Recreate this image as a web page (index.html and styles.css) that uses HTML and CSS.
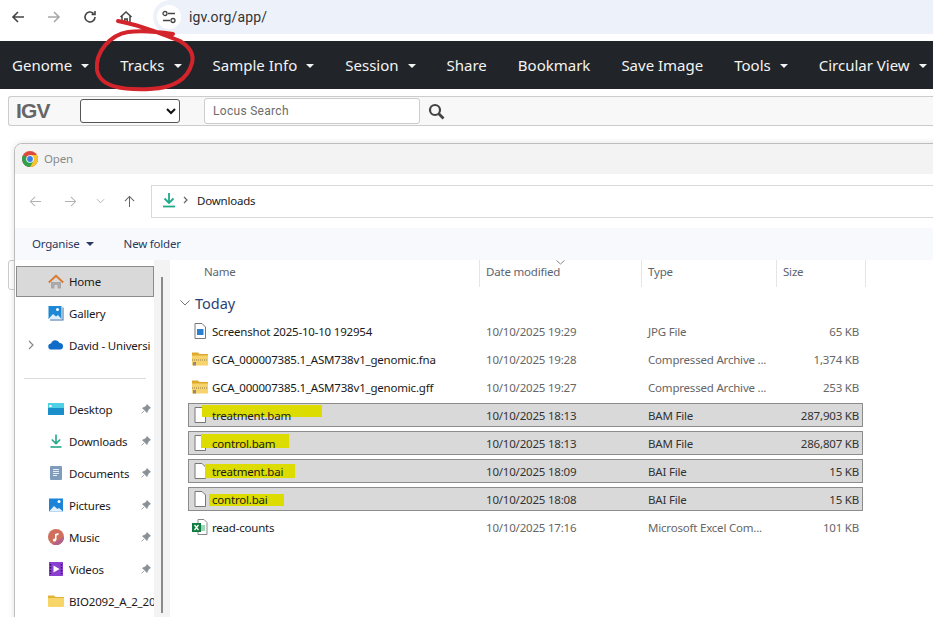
FILE: index.html
```html
<!DOCTYPE html>
<html lang="en">
<head>
    <meta charset="UTF-8">
    <title>IGV - Open dialog</title>
    <link rel="stylesheet" href="styles.css">
</head>
<body>

<!-- browser toolbar -->
<div class="browser-bar">
    <div class="browser-btns">
        <svg class="bicon" viewBox="0 0 14 14"><path d="M13 7H2M7 2L2 7l5 5" fill="none" stroke="#444" stroke-width="1.6"/></svg>
        <svg class="bicon" viewBox="0 0 14 14"><path d="M1 7h11M7 2l5 5-5 5" fill="none" stroke="#a8a8a8" stroke-width="1.6"/></svg>
        <svg class="bicon" viewBox="0 0 14 14"><path d="M12 7a5 5 0 1 1-1.6-3.7M12 1v3.4H8.6" fill="none" stroke="#444" stroke-width="1.6"/></svg>
        <svg class="bicon" viewBox="0 0 14 14"><path d="M1.5 7L7 2l5.500 5M3 6v6.500h8V6M5.800 12.500V9h2.400v3.500" fill="none" stroke="#444" stroke-width="1.500"/></svg>
    </div>
    <div class="url-pill">
        <span class="tune">
            <svg width="14" height="14" viewBox="0 0 14 14"><path d="M6 3.500h7M1 10.500h7" stroke="#444" stroke-width="1.500"/><circle cx="3" cy="3.500" r="2" fill="none" stroke="#444" stroke-width="1.300"/><circle cx="11" cy="10.500" r="2" fill="none" stroke="#444" stroke-width="1.300"/></svg>
        </span>
        <span class="url-text">igv.org/app/</span>
    </div>
</div>

<!-- igv navbar -->
<nav class="navbar">
    <span class="nav-item caret">Genome</span>
    <span class="nav-item caret">Tracks</span>
    <span class="nav-item caret">Sample Info</span>
    <span class="nav-item caret">Session</span>
    <span class="nav-item">Share</span>
    <span class="nav-item">Bookmark</span>
    <span class="nav-item">Save Image</span>
    <span class="nav-item caret">Tools</span>
    <span class="nav-item caret">Circular View</span>
</nav>

<div class="igv-bar">
    <span class="igv-logo">IGV</span>
    <div class="genome-select">
        <svg width="10" height="7" viewBox="0 0 10 7"><path d="M1 1l4 4 4-4" fill="none" stroke="#111" stroke-width="2"/></svg>
    </div>
    <div class="locus-input">Locus Search</div>
    <svg class="search-icon" width="17" height="17" viewBox="0 0 17 17"><circle cx="7" cy="7" r="5" fill="none" stroke="#444" stroke-width="2.200"/><path d="M10.800 10.800L15.500 15.500" stroke="#444" stroke-width="2.800"/></svg>
</div>
<div class="track-panel"></div>

<!-- file dialog -->
<div class="dialog">
    <div class="dialog-title">
        <svg width="16" height="16" viewBox="0 0 16 16">
            <circle cx="8" cy="8" r="8" fill="#dd4b3e"/>
            <path d="M8 8L1.100 4A8 8 0 0 0 8 16l3.500-4z" fill="#2fa04e"/>
            <path d="M8 4h6.900A8 8 0 0 1 8 16l3.500-6z" fill="#f6c42c"/>
            <circle cx="8" cy="8" r="3.800" fill="#fff"/>
            <circle cx="8" cy="8" r="2.900" fill="#3b7de8"/>
        </svg>
        <span>Open</span>
    </div>

    <div class="dialog-toolbar">
        <svg class="tool-icon" viewBox="0 0 14 14"><path d="M13 7H1.500M6.500 2l-5 5 5 5" fill="none" stroke="#b3b3b3" stroke-width="1.100"/></svg>
        <svg class="tool-icon tool-fwd" viewBox="0 0 14 14"><path d="M1 7h11.500M7.500 2l5 5-5 5" fill="none" stroke="#b3b3b3" stroke-width="1.100"/></svg>
        <svg class="tool-chev" viewBox="0 0 10 6"><path d="M1 1l4 4 4-4" fill="none" stroke="#b3b3b3" stroke-width="1.100"/></svg>
        <svg class="tool-icon" viewBox="0 0 14 14"><path d="M7 13V1.500M2 6.500l5-5 5 5" fill="none" stroke="#666" stroke-width="1.100"/></svg>
        <div class="address-box">
            <svg width="14" height="16" viewBox="0 0 14 16"><path d="M7 1v9.500M2.500 6.500L7 11l4.500-4.500" fill="none" stroke="#23a889" stroke-width="1.800"/><path d="M1 14.500h12" stroke="#23a889" stroke-width="1.800"/></svg>
            <svg class="crumb" width="5" height="8" viewBox="0 0 5 8"><path d="M1 1l3 3-3 3" fill="none" stroke="#666" stroke-width="1.200"/></svg>
            <span>Downloads</span>
        </div>
    </div>

    <div class="dialog-commands">
        <span class="cmd cmd-caret">Organise</span>
        <span class="cmd">New folder</span>
    </div>

    <div class="dialog-body">
        <aside class="sidebar">
            <div class="side-item selected">
                <svg class="side-icon" viewBox="0 0 16 16"><path d="M3 8h10v6.500H9.500V11h-3v3.500H3z" fill="#a9a9a9"/><path d="M.8 8.500L8 1.800l7.200 6.700" fill="none" stroke="#d9782f" stroke-width="1.800"/></svg>
                <span>Home</span>
            </div>
            <div class="side-item">
                <svg class="side-icon" viewBox="0 0 16 16"><rect x="0.500" y="1" width="13" height="13" fill="#1e88d6"/><path d="M.5 14l4.500-5 3 2.500L10 10l3.500 4z" fill="#dceefb"/><circle cx="9.500" cy="4.500" r="1.500" fill="#fff"/><path d="M14.500 2.500h1v13H2v-1h12.500z" fill="#3a6fa5"/></svg>
                <span>Gallery</span>
            </div>
            <div class="side-item">
                <svg class="side-chev" width="6" height="10" viewBox="0 0 6 10"><path d="M1 1l4 4-4 4" fill="none" stroke="#888" stroke-width="1.200"/></svg>
                <svg class="side-icon" viewBox="0 0 16 16"><path d="M3.500 12.500a3 3 0 0 1-.4-6A4.500 4.500 0 0 1 11.500 6a3.300 3.300 0 0 1 1 6.500z" fill="#0f6cc8"/></svg>
                <span>David - Universi</span>
            </div>
            <div class="side-sep"></div>
            <div class="side-item">
                <svg class="side-icon" viewBox="0 0 16 16"><rect y="2" width="16" height="12" fill="#1b8fc9"/><rect y="2" width="16" height="5" fill="#4fd0e6"/><rect x="1.500" y="4" width="2" height="2" fill="#fff"/></svg>
                <span>Desktop</span>
                <svg class="pin" viewBox="0 0 10 10"><path d="M6 .5L9.500 4 8 4.500 6.500 7 6 8.500 1.500 4 3 3.500 5.500 2zM3 7L.5 9.500" fill="#8a8f94" stroke="#8a8f94" stroke-width=".8"/></svg>
            </div>
            <div class="side-item">
                <svg class="side-icon" viewBox="0 0 16 16"><path d="M8 1.500v9M3.800 6.500L8 10.700l4.200-4.200" fill="none" stroke="#23a889" stroke-width="1.600"/><path d="M2.500 14h11" stroke="#23a889" stroke-width="1.600"/></svg>
                <span>Downloads</span>
                <svg class="pin" viewBox="0 0 10 10"><path d="M6 .5L9.500 4 8 4.500 6.500 7 6 8.500 1.500 4 3 3.500 5.500 2zM3 7L.5 9.500" fill="#8a8f94" stroke="#8a8f94" stroke-width=".8"/></svg>
            </div>
            <div class="side-item">
                <svg class="side-icon" viewBox="0 0 16 16"><rect x="2" y="1" width="12" height="14" rx="1" fill="#7f9cbd"/><path d="M5 4.500h6M5 6.500h6M5 8.500h6M5 10.500h4" stroke="#e8eef5" stroke-width="1"/></svg>
                <span>Documents</span>
                <svg class="pin" viewBox="0 0 10 10"><path d="M6 .5L9.500 4 8 4.500 6.500 7 6 8.500 1.500 4 3 3.500 5.500 2zM3 7L.5 9.500" fill="#8a8f94" stroke="#8a8f94" stroke-width=".8"/></svg>
            </div>
            <div class="side-item">
                <svg class="side-icon" viewBox="0 0 16 16"><rect x="1" y="1.500" width="14" height="13" fill="#1b83d8"/><path d="M1 14.500L6 9l3.500 3L11 11l4 3.500z" fill="#e4f1fb"/><circle cx="11" cy="4.500" r="1.500" fill="#fff"/></svg>
                <span>Pictures</span>
                <svg class="pin" viewBox="0 0 10 10"><path d="M6 .5L9.500 4 8 4.500 6.500 7 6 8.500 1.500 4 3 3.500 5.500 2zM3 7L.5 9.500" fill="#8a8f94" stroke="#8a8f94" stroke-width=".8"/></svg>
            </div>
            <div class="side-item">
                <svg class="side-icon" viewBox="0 0 16 16"><circle cx="8" cy="8" r="8" fill="#d0705c"/><path d="M16 8A8 8 0 0 1 4 15z" fill="#b2608c"/><path d="M7 11V5l3.500-1v2L8.500 6.500V11" fill="#fff"/><circle cx="6.500" cy="11" r="1.600" fill="#fff"/></svg>
                <span>Music</span>
                <svg class="pin" viewBox="0 0 10 10"><path d="M6 .5L9.500 4 8 4.500 6.500 7 6 8.500 1.500 4 3 3.500 5.500 2zM3 7L.5 9.500" fill="#8a8f94" stroke="#8a8f94" stroke-width=".8"/></svg>
            </div>
            <div class="side-item">
                <svg class="side-icon" viewBox="0 0 16 16"><rect x="1" y="1" width="14" height="14" fill="#8a3fd1"/><path d="M5.500 4.500v7l6-3.500z" fill="#fff"/><path d="M2.500 3v10M13.500 3v10" stroke="#35125e" stroke-width="1.400" stroke-dasharray="1.500 1.500"/></svg>
                <span>Videos</span>
                <svg class="pin" viewBox="0 0 10 10"><path d="M6 .5L9.500 4 8 4.500 6.500 7 6 8.500 1.500 4 3 3.500 5.500 2zM3 7L.5 9.500" fill="#8a8f94" stroke="#8a8f94" stroke-width=".8"/></svg>
            </div>
            <div class="side-item">
                <svg class="side-icon" viewBox="0 0 16 16"><path d="M0 2.500h6l1.500 1.500H16v2H0z" fill="#e0b33c"/><rect y="5" width="16" height="9" rx="1" fill="#f8d568"/></svg>
                <span>BIO2092_A_2_20</span>
            </div>
        </aside>

        <div class="side-scroll"><div class="side-thumb"></div></div>

        <section class="files">
            <div class="file-head">
                <div class="head-cell head-name">Name</div>
                <div class="head-cell">Date modified
                    <svg class="sort-chev" width="9" height="5" viewBox="0 0 9 5"><path d="M.5.500l4 3.500 4-3.500" fill="none" stroke="#888"/></svg>
                </div>
                <div class="head-cell">Type</div>
                <div class="head-cell head-last">Size</div>
            </div>

            <div class="group-head">
                <svg width="10" height="6" viewBox="0 0 10 6"><path d="M.5.500L5 5 9.500.500" fill="none" stroke="#777"/></svg>
                <span>Today</span>
            </div>

            <div class="file-row">
                <div class="file-name">
                    <svg class="file-icon" viewBox="0 0 16 16"><path d="M3 .5h7l3.500 3.500v11.500H3z" fill="#fff" stroke="#777"/><rect x="5" y="6" width="6.500" height="6" fill="#2a7fce"/></svg>
                    <span>Screenshot 2025-10-10 192954</span>
                </div>
                <div class="file-meta">10/10/2025 19:29</div>
                <div class="file-meta">JPG File</div>
                <div class="file-meta file-size">65 KB</div>
            </div>
            <div class="file-row">
                <div class="file-name">
                    <svg class="file-icon" viewBox="0 0 16 16"><path d="M0 1.500h6l1.500 1.500H16v2H0z" fill="#dfa92f"/><rect y="4.500" width="16" height="10" fill="#f6d36b"/><path d="M0 9h16" stroke="#b59a54" stroke-width="1.500" stroke-dasharray="1 1"/><rect x="1" y="11" width="3" height="3.500" fill="#8a8a8a"/></svg>
                    <span>GCA_000007385.1_ASM738v1_genomic.fna</span>
                </div>
                <div class="file-meta">10/10/2025 19:28</div>
                <div class="file-meta">Compressed Archive ...</div>
                <div class="file-meta file-size">1,374 KB</div>
            </div>
            <div class="file-row">
                <div class="file-name">
                    <svg class="file-icon" viewBox="0 0 16 16"><path d="M0 1.500h6l1.500 1.500H16v2H0z" fill="#dfa92f"/><rect y="4.500" width="16" height="10" fill="#f6d36b"/><path d="M0 9h16" stroke="#b59a54" stroke-width="1.500" stroke-dasharray="1 1"/><rect x="1" y="11" width="3" height="3.500" fill="#8a8a8a"/></svg>
                    <span>GCA_000007385.1_ASM738v1_genomic.gff</span>
                </div>
                <div class="file-meta">10/10/2025 19:27</div>
                <div class="file-meta">Compressed Archive ...</div>
                <div class="file-meta file-size">253 KB</div>
            </div>
            <div class="file-row picked">
                <div class="file-name">
                    <svg class="file-icon" viewBox="0 0 16 16"><path d="M3 .5h7l3.500 3.500v11.500H3z" fill="#fff" stroke="#777"/></svg>
                    <div class="mark mark-1"></div>
                    <span>treatment.bam</span>
                </div>
                <div class="file-meta">10/10/2025 18:13</div>
                <div class="file-meta">BAM File</div>
                <div class="file-meta file-size">287,903 KB</div>
            </div>
            <div class="file-row picked">
                <div class="file-name">
                    <svg class="file-icon" viewBox="0 0 16 16"><path d="M3 .5h7l3.500 3.500v11.500H3z" fill="#fff" stroke="#777"/></svg>
                    <div class="mark mark-2"></div>
                    <span>control.bam</span>
                </div>
                <div class="file-meta">10/10/2025 18:13</div>
                <div class="file-meta">BAM File</div>
                <div class="file-meta file-size">286,807 KB</div>
            </div>
            <div class="file-row picked">
                <div class="file-name">
                    <svg class="file-icon" viewBox="0 0 16 16"><path d="M3 .5h7l3.500 3.500v11.500H3z" fill="#fff" stroke="#777"/></svg>
                    <div class="mark mark-3"></div>
                    <span>treatment.bai</span>
                </div>
                <div class="file-meta">10/10/2025 18:09</div>
                <div class="file-meta">BAI File</div>
                <div class="file-meta file-size">15 KB</div>
            </div>
            <div class="file-row picked">
                <div class="file-name">
                    <svg class="file-icon" viewBox="0 0 16 16"><path d="M3 .5h7l3.500 3.500v11.500H3z" fill="#fff" stroke="#777"/></svg>
                    <div class="mark mark-4"></div>
                    <span>control.bai</span>
                </div>
                <div class="file-meta">10/10/2025 18:08</div>
                <div class="file-meta">BAI File</div>
                <div class="file-meta file-size">15 KB</div>
            </div>
            <div class="file-row">
                <div class="file-name">
                    <svg class="file-icon" viewBox="0 0 16 16"><path d="M6 .5h6l3 3v12H6z" fill="#fff" stroke="#888"/><rect x="9" y="6" width="4" height="6" fill="#9fd4b5"/><rect y="4" width="9" height="9" fill="#107c41"/><path d="M2.500 6l4 5M6.500 6l-4 5" stroke="#fff" stroke-width="1.300"/></svg>
                    <span>read-counts</span>
                </div>
                <div class="file-meta">10/10/2025 17:16</div>
                <div class="file-meta">Microsoft Excel Com...</div>
                <div class="file-meta file-size">101 KB</div>
            </div>
        </section>
    </div>
</div>

<!-- red pen circle drawn over the screenshot -->
<svg class="scribble" width="933" height="100" viewBox="0 0 933 100">
    <path d="M118 21C135 24 165 35 180 41C190 47 194 55 192 63C188 78 176 88 150 89C125 90 100 88 97 70C95 52 110 35 128 32C142 30 160 32 173 34" fill="none" stroke="#d3242b" stroke-width="4" stroke-linecap="round"/>
</svg>

</body>
</html>
```

FILE: styles.css
```css
* {
    box-sizing: border-box;
}
body {
    margin: 0;
    width: 933px;
    height: 617px;
    overflow: hidden;
    position: relative;
    background-color: #fff;
    font-family: "Noto Sans", sans-serif;
    color: #1a1a1a;
}

/* browser bar */
.browser-bar {
    display: flex;
    height: 34px;
    align-items: center;
}
.browser-btns {
    display: flex;
    gap: 22px;
    width: 153px;
    padding-left: 11px;
}
.bicon {
    width: 14px;
    height: 14px;
}
.url-pill {
    flex: 1;
    height: 34px;
    display: flex;
    align-items: center;
    gap: 8px;
    padding-left: 4px;
    background-color: #edf2fa;
    border-radius: 17px 0 0 17px;
}
.tune {
    width: 24px;
    height: 24px;
    display: flex;
    align-items: center;
    justify-content: center;
    background-color: #fff;
    border-radius: 50%;
}
.url-text {
    font-family: Roboto, sans-serif;
    font-size: 14px;
    letter-spacing: 0.150px;
    color: #333;
}

/* igv navbar */
.navbar {
    display: flex;
    align-items: center;
    gap: 31px;
    height: 48px;
    margin-top: 7px;
    padding-left: 12px;
    background-color: #212529;
    white-space: nowrap;
}
.nav-item {
    font-size: 15px;
    color: #f4f4f4;
}
.caret::after {
    content: "";
    display: inline-block;
    margin-left: 9px;
    vertical-align: 3px;
    border-top: 4.500px solid #f4f4f4;
    border-left: 4.500px solid transparent;
    border-right: 4.500px solid transparent;
}

.igv-bar {
    display: flex;
    align-items: center;
    height: 30px;
    margin: 7px 0 0 8px;
    padding-left: 7px;
    background-color: #f8f8f8;
    border: 1px solid #ccc;
    border-right: none;
    border-radius: 3px 0 0 3px;
}
.igv-logo {
    width: 64px;
    font-family: "Liberation Sans", sans-serif;
    font-size: 21px;
    font-weight: bold;
    letter-spacing: -0.800px;
    color: #666;
}
.genome-select {
    width: 100px;
    height: 24px;
    display: flex;
    align-items: center;
    justify-content: flex-end;
    padding-right: 3px;
    margin-right: 24px;
    background-color: #fff;
    border: 1px solid #555;
    border-radius: 3px;
}
.locus-input {
    width: 216px;
    height: 26px;
    padding-left: 8px;
    margin-right: 8px;
    font-family: Roboto, sans-serif;
    font-size: 12px;
    line-height: 24px;
    letter-spacing: 0.300px;
    color: #6c6c6c;
    background-color: #fff;
    border: 1px solid #ccc;
    border-radius: 3px;
}
.track-panel {
    width: 30px;
    height: 30px;
    margin: 134px 0 0 8px;
    border: 1px solid #ccc;
    border-radius: 3px;
}

/* file dialog, a window on top of the page */
.dialog {
    position: absolute;
    left: 14px;
    top: 143px;
    width: 940px;
    height: 490px;
    font-size: 11.500px;
    letter-spacing: -0.200px;
    background-color: #fff;
    border: 1px solid #bdbdbd;
    border-radius: 8px 0 0 0;
    box-shadow: 0 0 6px rgba(0, 0, 0, 0.12);
}
.dialog-title {
    display: flex;
    align-items: center;
    gap: 6px;
    height: 30px;
    padding: 0 0 1px 7px;
    color: #8a8a8a;
    background-color: #f3f3f3;
    border-radius: 8px 0 0 0;
}
.dialog-toolbar {
    display: flex;
    align-items: center;
    height: 54px;
    padding-left: 14px;
}
.tool-icon {
    width: 13px;
    height: 13px;
    margin-right: 22px;
}
.tool-fwd {
    margin-right: 19px;
}
.tool-chev {
    width: 9px;
    height: 6px;
    margin-right: 18px;
}
.address-box {
    flex: 1;
    display: flex;
    align-items: center;
    height: 33px;
    margin-left: -7px;
    padding: 0 0 2px 10px;
    border: 1px solid #d9d9d9;
}
.crumb {
    margin: 0 9px 0 7px;
}
.dialog-commands {
    display: flex;
    align-items: center;
    gap: 30px;
    height: 32px;
    padding: 0 0 2px 17px;
    background-color: #f7f9fc;
}
.cmd {
    color: #2b3a5e;
}
.cmd-caret::after {
    content: "";
    display: inline-block;
    margin-left: 6px;
    vertical-align: 2px;
    border-top: 4px solid #2b3a5e;
    border-left: 4px solid transparent;
    border-right: 4px solid transparent;
}
.dialog-body {
    display: flex;
    height: 373px;
}

/* left navigation */
.sidebar {
    width: 139px;
    padding-top: 6px;
    overflow: hidden;
}
.side-item {
    position: relative;
    display: flex;
    align-items: center;
    height: 30px;
    margin: 0 0 2px 1px;
    padding-left: 32px;
    white-space: nowrap;
}
.side-item.selected {
    height: 31px;
    margin-bottom: 1px;
    padding-left: 31px;
    background-color: #d9d9d9;
    border: 1px solid #8c8c8c;
}
.side-icon {
    flex: none;
    width: 16px;
    height: 16px;
    margin-right: 5px;
}
.side-chev {
    position: absolute;
    left: 12px;
    top: 10px;
}
.pin {
    position: absolute;
    right: 3px;
    top: 10px;
    width: 10px;
    height: 10px;
}
.side-sep {
    height: 1px;
    margin: 18px 8px 15px 9px;
    background-color: #ddd;
}
.side-scroll {
    width: 16px;
    padding: 17px 0 0 7px;
    background-color: #f3f3f3;
}
.side-thumb {
    width: 2px;
    height: 336px;
    background-color: #8a8a8a;
}

/* file list */
.files {
    flex: 1;
}
.file-head {
    display: grid;
    grid-template-columns: 309px 162px 135px 90px;
    height: 27px;
}
.head-cell {
    position: relative;
    padding: 4px 0 0 6px;
    color: #5c6470;
    border-left: 1px solid #e5e5e5;
}
.head-name {
    padding-left: 34px;
    border-left: none;
}
.head-last {
    border-right: 1px solid #e5e5e5;
}
.sort-chev {
    position: absolute;
    left: 76px;
    top: 0;
}
.group-head {
    display: flex;
    align-items: center;
    gap: 5px;
    height: 32px;
    padding-left: 10px;
    font-size: 14.500px;
    letter-spacing: 0;
    color: #2b3f75;
}
.file-row {
    position: relative;
    display: grid;
    grid-template-columns: 297px 162px 132px 79px;
    align-items: center;
    width: 675px;
    height: 24px;
    margin: 0 0 4px 18px;
    border: 1px solid transparent;
}
.file-row.picked {
    background-color: #d9d9d9;
    border-color: #8c8c8c;
}
.file-name {
    display: flex;
    align-items: center;
    gap: 4px;
    padding-left: 3px;
}
.file-icon {
    width: 16px;
    height: 16px;
}
.file-meta {
    color: #666;
}
.picked .file-meta {
    color: #333;
}
.file-size {
    text-align: right;
}

/* yellow highlighter strokes, over the file icon and behind the name */
.mark {
    position: absolute;
    background-color: #dcdc00;
}
.file-name span {
    position: relative;
}
.mark-1 {
    left: 13px;
    top: 1px;
    width: 120px;
    height: 12px;
}
.mark-2 {
    left: 12px;
    top: 2px;
    width: 88px;
    height: 14px;
}
.mark-3 {
    left: 16px;
    top: 4px;
    width: 90px;
    height: 14px;
}
.mark-4 {
    left: 20px;
    top: 6px;
    width: 75px;
    height: 12px;
}
.scribble {
    position: absolute;
    left: 0;
    top: 0;
    pointer-events: none;
}
```
